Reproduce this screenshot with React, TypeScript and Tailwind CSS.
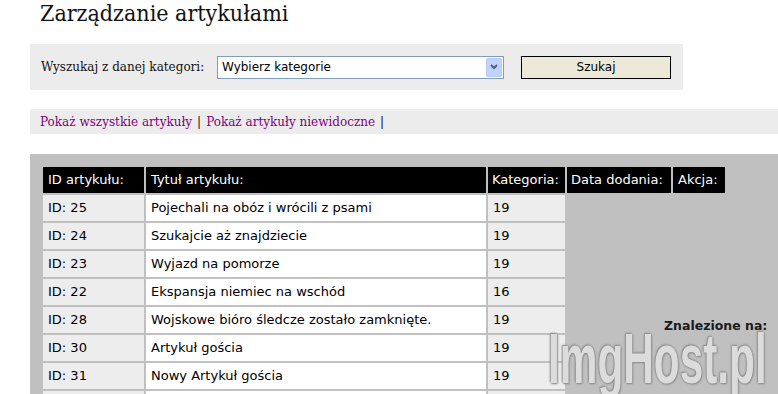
import React from "react";

const rows = [
  ["ID: 25", "Pojechali na obóz i wrócili z psami", "19"],
  ["ID: 24", "Szukajcie aż znajdziecie", "19"],
  ["ID: 23", "Wyjazd na pomorze", "19"],
  ["ID: 22", "Ekspansja niemiec na wschód", "16"],
  ["ID: 28", "Wojskowe bióro śledcze zostało zamknięte.", "19"],
  ["ID: 30", "Artykuł gościa", "19"],
  ["ID: 31", "Nowy Artykuł gościa", "19"],
  ["ID: 32", "", "19"],
];

export default function App() {
  return (
    <div className="relative w-[778px] h-[394px] overflow-hidden bg-white">
      <h1
        className="pl-[40px] pt-[0px] text-[23px] leading-[26px] text-[#111]"
        style={{ fontFamily: "'DejaVu Serif', serif", fontStretch: "condensed" }}
      >
        Zarządzanie artykułami
      </h1>

      <div className="ml-[30px] mt-[18px] w-[653px] h-[46px] bg-[#ececec] flex items-center pl-[11px]">
        <span className="text-[12px] text-[#111] w-[176px]" style={{ fontFamily: "'DejaVu Serif', serif" }}>
          Wyszukaj z danej kategori:
        </span>
        <div className="w-[287px] h-[23px] border border-[#7f9db9] bg-white flex items-center justify-between pl-[4px] pr-[1px]">
          <span className="text-[12px] text-black" style={{ fontFamily: "'DejaVu Sans', sans-serif" }}>
            Wybierz kategorie
          </span>
          <div className="w-[16px] h-[19px] bg-[#c1d3fb] border border-[#b7c9f3] rounded-[2px] flex items-center justify-center">
            <svg width="8" height="6" viewBox="0 0 8 6">
              <path d="M1 1 L4 4 L7 1" stroke="#4d6185" strokeWidth="2" fill="none" />
            </svg>
          </div>
        </div>
        <div
          className="ml-[17px] w-[150px] h-[23px] bg-[#ece9d8] border border-black flex items-center justify-center text-[12px] text-black"
          style={{ fontFamily: "'DejaVu Sans', sans-serif" }}
        >
          Szukaj
        </div>
      </div>

      <div
        className="ml-[30px] mt-[19px] h-[25px] bg-[#ececec] flex items-center pl-[10px] text-[12px] text-[#111]"
        style={{ fontFamily: "'DejaVu Serif', serif" }}
      >
        <span className="text-[#800080]">Pokaż wszystkie artykuły</span>
        <span className="mx-[5px]">|</span>
        <span className="text-[#800080]">Pokaż artykuły niewidoczne</span>
        <span className="ml-[5px]">|</span>
      </div>

      <div className="ml-[30px] mt-[20px] bg-[#c0c0c0] pl-[11px] pt-[11px] h-[300px]">
        <table
          className="border-separate border-spacing-[2px] text-[13px]"
          style={{ fontFamily: "'DejaVu Sans', Verdana, sans-serif" }}
        >
          <thead>
            <tr className="h-[26px]">
              <th className="bg-black text-white font-normal text-left pl-[5px] w-[101px]">ID artykułu:</th>
              <th className="bg-black text-white font-normal text-left pl-[5px] w-[340px]">Tytuł artykułu:</th>
              <th className="bg-black text-white font-normal text-left pl-[4px] w-[77px]">Kategoria:</th>
              <th className="bg-black text-white font-normal text-left pl-[4px] w-[104px]">Data dodania:</th>
              <th className="bg-black text-white font-normal text-left pl-[5px] w-[52px]">Akcja:</th>
            </tr>
          </thead>
          <tbody>
            {rows.map((r, i) => (
              <tr key={i} className="h-[26px]">
                <td className="bg-[#ededed] text-black pl-[5px]">{r[0]}</td>
                <td className="bg-white text-black pl-[5px]">{r[1]}</td>
                <td className="bg-[#ededed] text-black pl-[5px]">{r[2]}</td>
              </tr>
            ))}
          </tbody>
        </table>
      </div>

      <div
        className="absolute left-[664px] top-[317px] text-[12.5px] font-bold text-[#1a1a1a]"
        style={{ fontFamily: "'DejaVu Sans', Verdana, sans-serif" }}
      >
        Znalezione na:
      </div>
      <div
        className="absolute left-[548px] top-[324px] text-[58px] font-bold text-[#dcdcdc] leading-none whitespace-nowrap"
        style={{
          fontFamily: "'Liberation Sans', sans-serif",
          transform: "scale(0.73, 1.2)",
          transformOrigin: "top left",
          textShadow: "0 0 2px #8a8a8a, 1px 1px 2px #8a8a8a, -1px -1px 2px #8a8a8a",
        }}
      >
        ImgHost.pl
      </div>
    </div>
  );
}
